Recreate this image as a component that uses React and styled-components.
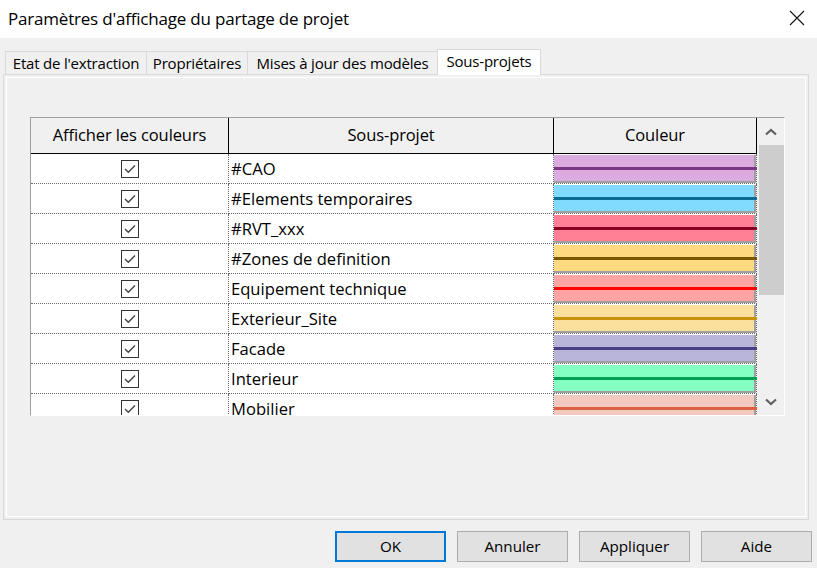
import React from 'react';
import styled, { createGlobalStyle } from 'styled-components';

const GlobalStyle = createGlobalStyle`
  html, body {
    margin: 0;
    padding: 0;
    background: #f0f0f0;
  }
  body {
    font-family: "Open Sans", "Noto Sans", sans-serif;
    color: #000;
  }
`;

const Window = styled.div`
  width: 817px;
  height: 568px;
  display: flex;
  flex-direction: column;
  background: #f0f0f0;
  overflow: hidden;
`;

const TitleBar = styled.div`
  height: 38px;
  flex-shrink: 0;
  background: #fff;
  display: flex;
  align-items: center;
  justify-content: space-between;
  padding: 0 12px 2px 8px;
  box-sizing: border-box;
`;

const Title = styled.span`
  font-size: 17px;
  letter-spacing: -0.2px;
`;

const CloseIcon = styled.svg`
  width: 16px;
  height: 16px;
  display: block;
`;

const Body = styled.div`
  flex: 1;
  display: flex;
  flex-direction: column;
  padding: 11px 0 0 3px;
`;

const TabStrip = styled.div`
  display: flex;
  height: 26px;
  padding-left: 2px;
  position: relative;
  z-index: 1;
  margin-bottom: -1px;
`;

const Tab = styled.div`
  width: ${p => p.$w}px;
  height: ${p => (p.$active ? 26 : 23)}px;
  margin-top: ${p => (p.$active ? 0 : 2)}px;
  margin-left: -1px;
  box-sizing: border-box;
  border: 1px solid #d9d9d9;
  border-bottom: none;
  background: ${p => (p.$active ? '#fff' : '#f0f0f0')};
  display: flex;
  align-items: center;
  justify-content: center;
  padding-bottom: ${p => (p.$active ? 4 : 1)}px;
  font-size: 15px;
  letter-spacing: -0.2px;
  white-space: nowrap;
  &:first-child {
    margin-left: 0;
  }
`;

const Panel = styled.div`
  width: 806px;
  height: 446px;
  box-sizing: border-box;
  border: 1px solid #d9d9d9;
  box-shadow: inset 0 0 0 2px #f0f0f0, inset 0 0 0 3px #fff;
  padding: 42px 0 0 26px;
`;

const Grid = styled.div`
  width: 755px;
  height: 299px;
  box-sizing: border-box;
  border-style: solid;
  border-width: 1px;
  border-color: #a0a0a0 #fff #fff #a0a0a0;
  display: flex;
  background: #fff;
  overflow: hidden;
`;

const Table = styled.div`
  width: 726px;
  display: grid;
  grid-template-columns: 198px 325px 203px;
  grid-auto-rows: 30px;
  grid-template-rows: 36px;
  align-content: start;
  overflow: hidden;
`;

const HeaderCell = styled.div`
  background: #f0f0f0;
  border-right: 1px solid #000;
  border-bottom: 1px solid #000;
  display: flex;
  align-items: center;
  justify-content: center;
  font-size: 16.5px;
  letter-spacing: -0.1px;
  padding-bottom: 2px;
  box-sizing: border-box;
`;

const CheckCell = styled.div`
  border-right: 1px dotted #6a6a6a;
  border-bottom: 1px dotted #6a6a6a;
  display: flex;
  align-items: center;
  justify-content: center;
  padding-left: 1px;
`;

const CheckBox = styled.div`
  width: 18px;
  height: 18px;
  box-sizing: border-box;
  border: 1px solid #333;
  background: #fff;
  display: flex;
  align-items: center;
  justify-content: center;
`;

const NameCell = styled.div`
  border-bottom: 1px dotted #6a6a6a;
  display: flex;
  align-items: center;
  padding-left: 2px;
  padding-bottom: 1px;
  font-size: 16.6px;
  white-space: nowrap;
`;

const ColorCell = styled.div`
  border-left: 1px dotted #6a6a6a;
  border-right: 1px dotted #6a6a6a;
  border-bottom: 1px dotted #6a6a6a;
  margin-left: -1px;
  display: flex;
`;

const Swatch = styled.div`
  flex: 1;
  background: ${p => p.$bg};
  border-right: 2px solid #a0a0a0;
  border-bottom: 2px solid #a0a0a0;
  display: flex;
  align-items: center;
  margin-top: 1px;
`;

const Stripe = styled.div`
  flex: 1;
  height: 3px;
  margin: 0 -3px 0 0;
  background: ${p => p.$line};
`;

const ScrollBar = styled.div`
  width: 27px;
  background: #f0f0f0;
  display: flex;
  flex-direction: column;
`;

const ScrollButton = styled.div`
  height: 27px;
  display: flex;
  align-items: center;
  justify-content: center;
  padding-left: 1px;
`;

const Thumb = styled.div`
  height: 150px;
  margin-left: 2px;
  background: #cdcdcd;
`;

const Spacer = styled.div`
  flex: 1;
`;

const Footer = styled.div`
  display: flex;
  justify-content: flex-end;
  gap: 11px;
  padding: 11px 5px 0 0;
`;

const Button = styled.button`
  width: 111px;
  height: 31px;
  box-sizing: border-box;
  background: #e1e1e1;
  border: ${p => (p.$primary ? '2px solid #0078d7' : '1px solid #adadad')};
  font-family: "Open Sans", "Noto Sans", sans-serif;
  font-size: 15.2px;
  color: #000;
  padding: 0 0 2px;
`;

const rows = [
  { name: '#CAO', bg: '#dbabdf', line: '#7b3785' },
  { name: '#Elements temporaires', bg: '#80dbff', line: '#0b6d96' },
  { name: '#RVT_xxx', bg: '#ff8095', line: '#8a0021' },
  { name: '#Zones de definition', bg: '#ffd97f', line: '#7b5800' },
  { name: 'Equipement technique', bg: '#ffa3a3', line: '#ff0000' },
  { name: 'Exterieur_Site', bg: '#fbe09d', line: '#c8930c' },
  { name: 'Facade', bg: '#b8b4da', line: '#4a3f85' },
  { name: 'Interieur', bg: '#86ffc2', line: '#00a152' },
  { name: 'Mobilier', bg: '#f3c8be', line: '#dc6142' },
];

const tabs = [
  { label: "Etat de l'extraction", w: 142 },
  { label: 'Propriétaires', w: 102 },
  { label: 'Mises à jour des modèles', w: 191 },
  { label: 'Sous-projets', w: 104, active: true },
];

function Check() {
  return (
    <svg width="14" height="14" viewBox="0 0 14 14">
      <polyline points="2,7 5.3,10.2 12,3.5" fill="none" stroke="#444" strokeWidth="1.4" />
    </svg>
  );
}

function Chevron({ down }) {
  return (
    <svg width="12" height="8" viewBox="0 0 12 8">
      <polyline
        points={down ? '1,1.5 6,6 11,1.5' : '1,6.5 6,2 11,6.5'}
        fill="none"
        stroke="#606060"
        strokeWidth="2.2"
      />
    </svg>
  );
}

export default function App() {
  return (
    <Window>
      <GlobalStyle />
      <TitleBar>
        <Title>Paramètres d'affichage du partage de projet</Title>
        <CloseIcon viewBox="0 0 16 16">
          <path d="M1 1 L15 15 M15 1 L1 15" stroke="#111" strokeWidth="1.1" />
        </CloseIcon>
      </TitleBar>
      <Body>
        <TabStrip>
          {tabs.map(t => (
            <Tab key={t.label} $w={t.w} $active={t.active}>{t.label}</Tab>
          ))}
        </TabStrip>
        <Panel>
          <Grid>
            <Table>
              <HeaderCell>Afficher les couleurs</HeaderCell>
              <HeaderCell>Sous-projet</HeaderCell>
              <HeaderCell>Couleur</HeaderCell>
              {rows.map(r => (
                <React.Fragment key={r.name}>
                  <CheckCell>
                    <CheckBox><Check /></CheckBox>
                  </CheckCell>
                  <NameCell>{r.name}</NameCell>
                  <ColorCell>
                    <Swatch $bg={r.bg}>
                      <Stripe $line={r.line} />
                    </Swatch>
                  </ColorCell>
                </React.Fragment>
              ))}
            </Table>
            <ScrollBar>
              <ScrollButton><Chevron /></ScrollButton>
              <Thumb />
              <Spacer />
              <ScrollButton><Chevron down /></ScrollButton>
            </ScrollBar>
          </Grid>
        </Panel>
        <Footer>
          <Button $primary>OK</Button>
          <Button>Annuler</Button>
          <Button>Appliquer</Button>
          <Button>Aide</Button>
        </Footer>
      </Body>
    </Window>
  );
}
